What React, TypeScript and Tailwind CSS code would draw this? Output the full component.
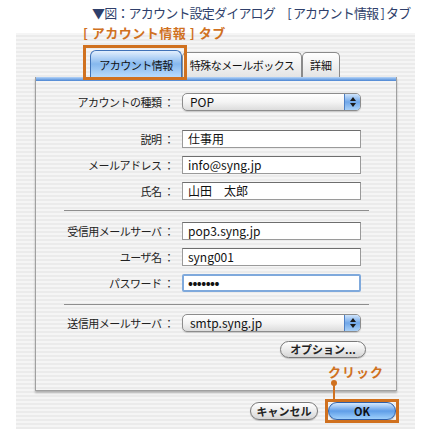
import React from 'react';

const stripes =
  'bg-[repeating-linear-gradient(180deg,#f5f5f5_0px,#f5f5f5_2px,#ebebeb_2px,#ebebeb_4px)]';

function Field({ label, value, focused }: { label: string; value: string; focused?: boolean }) {
  return (
    <div className="flex items-center">
      <div className="w-[140px] pr-[2px] text-right text-[11px] tracking-[-0.5px] text-[#222]">{label}</div>
      <div
        className={
          focused
            ? 'ml-[6px] h-[18px] w-[179px] rounded-[2px] border-2 border-[#7fa9dc] bg-white pl-[4px] text-[13px] font-bold leading-[14px] tracking-[-0.5px] text-[#111]'
            : 'ml-[6px] h-[18px] w-[179px] border border-[#9a9a9a] border-t-[#6e6e6e] bg-white pl-[5px] text-[12px] leading-[16px] text-[#111]'
        }
      >
        {value}
      </div>
    </div>
  );
}

function PopUp({ label, value }: { label: string; value: string }) {
  return (
    <div className="flex items-center">
      <div className="w-[140px] pr-[2px] text-right text-[11px] tracking-[-0.5px] text-[#222]">{label}</div>
      <div className="ml-[6px] flex h-[18px] w-[179px] overflow-hidden rounded-[5px] border border-[#8c8c8c] bg-gradient-to-b from-white via-[#f4f4f4] to-[#dcdcdc] shadow-[0_1px_1px_rgba(0,0,0,0.15)]">
        <div className="flex-1 pl-[7px] text-[12px] leading-[16px] text-[#111]">{value}</div>
        <div className="flex w-[16px] flex-col items-center justify-center gap-[2px] border-l border-[#4f80c4] bg-gradient-to-b from-[#cfe4fb] via-[#6fa6e8] to-[#a9d0f7]">
          <svg width="6" height="4" viewBox="0 0 6 4">
            <path d="M3 0 L6 4 L0 4 Z" fill="#1a1a1a" />
          </svg>
          <svg width="6" height="4" viewBox="0 0 6 4">
            <path d="M0 0 L6 0 L3 4 Z" fill="#1a1a1a" />
          </svg>
        </div>
      </div>
    </div>
  );
}

function Separator() {
  return <div className="ml-[28px] h-[2px] w-[305px] border-t border-[#8e8e8e] border-b-white" />;
}

export default function App() {
  return (
    <div
      className="relative h-[436px] w-[430px] overflow-hidden bg-white"
      style={{ fontFamily: '"Noto Sans CJK JP", "Liberation Sans", sans-serif' }}
    >
      {/* Title */}
      <div className="h-[33px] whitespace-nowrap pl-[92px] pt-[5px] text-[13px] leading-[16px] tracking-[-0.8px] text-[#2f3f6b]">
        ▼図：アカウント設定ダイアログ　[ アカウント情報 ] タブ
      </div>

      {/* Window */}
      <div className={`ml-[16px] flex h-[396px] w-[399px] flex-col ${stripes}`}>
        {/* Tabs */}
        <div className="flex items-end pl-[74px] pt-[17px]">
          <div className="flex h-[27px] w-[92px] items-center justify-center rounded-t-[6px] border border-b-0 border-[#3f72b8] bg-gradient-to-b from-[#e2effd] via-[#86b8ee] to-[#b9dbfb] pt-[2px] text-[11px] tracking-[-0.5px] text-[#111]">
            アカウント情報
          </div>
          <div className="flex h-[25px] w-[120px] items-center justify-center rounded-t-[5px] border border-b-0 border-[#8a8a8a] bg-gradient-to-b from-white to-[#e4e4e4] text-[11px] tracking-[-0.5px] text-[#111]">
            特殊なメールボックス
          </div>
          <div className="flex h-[25px] w-[38px] items-center justify-center rounded-t-[5px] border border-b-0 border-[#8a8a8a] bg-gradient-to-b from-white to-[#e4e4e4] text-[11px] text-[#111]">
            詳細
          </div>
        </div>

        {/* Panel */}
        <div className="ml-[19px] flex h-[314px] w-[362px] flex-col border-x border-b border-[#a0a0a0] shadow-[0_2px_2px_rgba(0,0,0,0.25)]">
          <div className="h-[4px] bg-gradient-to-b from-[#b7d4f6] via-[#7eaee9] to-[#4d85d0]" />
          <div className={`flex flex-1 flex-col ${stripes}`}>
            <div className="mt-[12px]">
              <PopUp label="アカウントの種類 ：" value="POP" />
            </div>
            <div className="mt-[19px] flex flex-col gap-[8px]">
              <Field label="説明 ：" value="仕事用" />
              <Field label="メールアドレス ：" value="info@syng.jp" />
              <Field label="氏名 ：" value="山田　太郎" />
            </div>
            <div className="mt-[10px]">
              <Separator />
            </div>
            <div className="mt-[10px] flex flex-col gap-[8px]">
              <Field label="受信用メールサーバ ：" value="pop3.syng.jp" />
              <Field label="ユーザ名 ：" value="syng001" />
              <Field label="パスワード ：" value="•••••••" focused />
            </div>
            <div className="mt-[12px]">
              <Separator />
            </div>
            <div className="mt-[8px]">
              <PopUp label="送信用メールサーバ ：" value="smtp.syng.jp" />
            </div>
            <div className="mt-[9px] flex justify-end pr-[30px]">
              <div className="flex h-[17px] w-[86px] items-center justify-center rounded-full border border-[#7a7a7a] bg-gradient-to-b from-white via-[#ececec] to-[#d6d6d6] text-[11px] font-bold text-[#222] shadow-[0_1px_1px_rgba(0,0,0,0.2)]">
                オプション...
              </div>
            </div>
          </div>
        </div>

        {/* Bottom buttons */}
        <div className="mt-[11px] flex justify-end gap-[10px] pr-[19px]">
          <div className="flex h-[18px] w-[68px] items-center justify-center rounded-full border border-[#7a7a7a] bg-gradient-to-b from-white via-[#ececec] to-[#d6d6d6] text-[11px] font-bold text-[#222] shadow-[0_1px_1px_rgba(0,0,0,0.2)]">
            キャンセル
          </div>
          <div className="flex h-[18px] w-[68px] items-center justify-center rounded-full border border-[#2e5fa8] bg-gradient-to-b from-[#d6e9fd] via-[#5f9ee8] to-[#9fd0fb] text-[11px] font-bold text-[#111] shadow-[0_1px_1px_rgba(0,0,0,0.25)]">
            OK
          </div>
        </div>
      </div>

      {/* Annotations */}
      <div className="absolute left-[83px] top-[26px] whitespace-nowrap text-[13px] font-bold leading-[14px] tracking-[0.5px] text-[#d0711f]">
        [ アカウント情報 ] タブ
      </div>
      <div className="absolute left-[83px] top-[45px] h-[35px] w-[104px] border-[3px] border-[#d0711f]" />
      <div className="absolute left-[328px] top-[365px] text-[13px] font-bold leading-[14px] tracking-[1px] text-[#d0711f]">
        クリック
      </div>
      <div className="absolute left-[331px] top-[380px] h-[6px] w-[6px] rounded-full bg-[#d0711f]" />
      <div className="absolute left-[333px] top-[383px] h-[17px] w-[2px] bg-[#d0711f]" />
      <div className="absolute left-[325px] top-[399px] h-[24px] w-[74px] border-[3px] border-[#d0711f]" />
    </div>
  );
}
